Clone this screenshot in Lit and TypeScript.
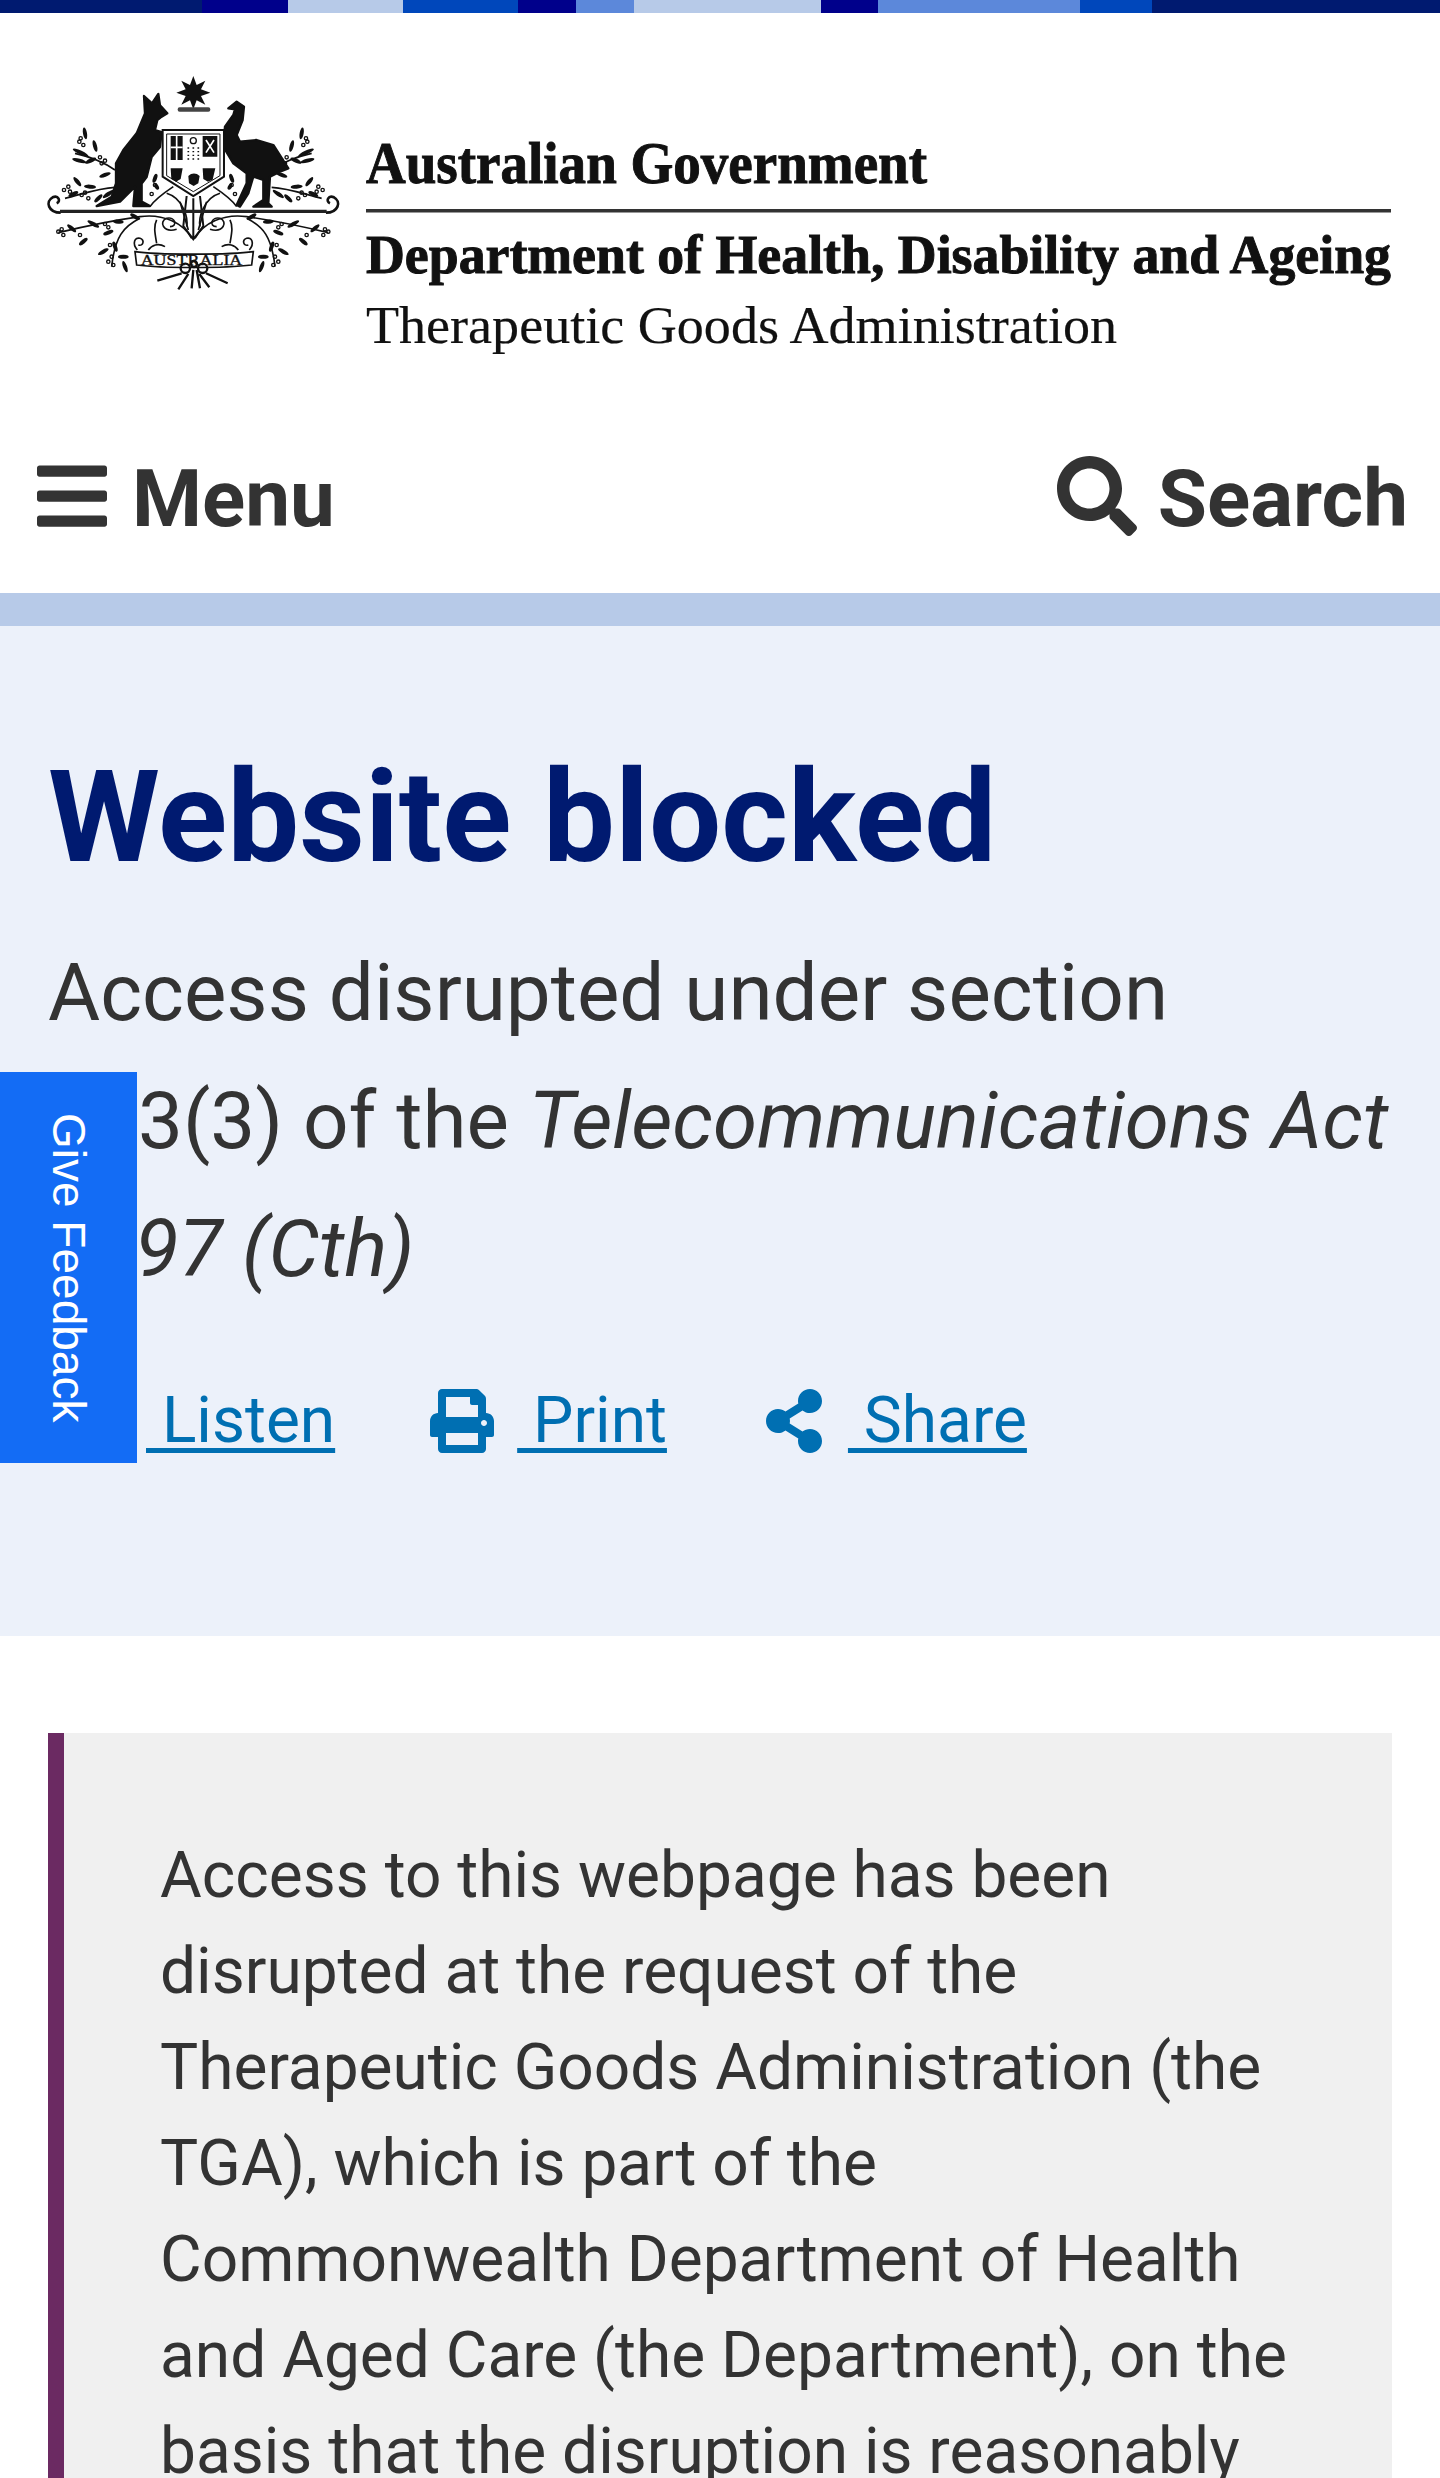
import { LitElement, html, css, svg } from "lit";
import { customElement } from "lit/decorators.js";

const SEGMENTS: [number, string][] = [
  [202, "#001a70"], [86, "#00008b"], [115, "#b7cae8"], [115, "#0047bb"], [58, "#00008b"],
  [58, "#5c88da"], [187, "#b7cae8"], [57, "#00008b"], [202, "#5c88da"], [72, "#0047bb"], [288, "#001a70"],
];

// x, y, angle, half length — left half of the crest's foliage; mirrored for the right.
const LEAVES: number[][] = [
  [135, 190, 80, 18], [165, 228, 75, 18], [122, 248, 25, 26], [118, 272, 15, 22], [152, 272, -25, 18], [195, 315, -20, 18],
  [112, 335, 50, 17], [150, 350, 5, 18], [100, 372, -25, 16], [205, 372, -35, 20], [175, 385, -45, 16],
  [95, 475, 40, 17], [160, 462, 30, 20], [130, 515, -40, 16], [235, 455, 5, 16], [205, 488, -20, 16], [285, 440, 30, 16],
  [190, 545, -30, 18], [250, 560, 0, 16], [255, 590, 70, 18], [225, 530, 70, 16], [345, 325, -70, 14], [350, 350, 60, 10],
];
const DOTS: number[][] = [
  [122, 205], [130, 225], [118, 215], [180, 262], [195, 272], [185, 280], [85, 350], [72, 360], [90, 365], [125, 375], [145, 385], [135, 368],
  [345, 345], [335, 372], [55, 485], [65, 478], [70, 495], [195, 462], [205, 472], [120, 495], [215, 560], [205, 575], [220, 585], [210, 525],
];

const foliage = svg`
  <g fill="#111">
    ${LEAVES.map(([x, y, a, l]) => svg`<ellipse cx=${x} cy=${y} rx=${l} ry="6" transform="rotate(${a} ${x} ${y})"></ellipse>`)}
    ${DOTS.map(([x, y]) => svg`<circle cx=${x} cy=${y} r="5" fill="none" stroke="#111" stroke-width="4"></circle>`)}
  </g>
  <g fill="none" stroke="#111" stroke-width="5">
    <path d="M225 300 C190 275 150 260 105 250"></path>
    <path d="M225 352 C170 355 120 375 75 385"></path>
    <path d="M455 505 C430 460 370 430 300 440 C230 450 130 470 55 488"></path>
    <path d="M300 445 C250 470 225 500 215 590"></path>
    <path d="M440 470 C445 445 430 385 380 370"></path>
    <path d="M410 478 C370 490 355 455 380 445 C405 438 415 470 390 470"></path>
    <path d="M350 520 C345 490 340 470 350 450"></path>
    <path d="M292 540 C275 520 285 500 300 505 C315 510 310 530 295 525"></path>
    <path d="M325 540 C335 525 355 518 375 530"></path>
    <path d="M420 395 L445 480 M400 350 C370 370 340 395 330 410"></path>
  </g>`;

@customElement("app-root")
export class AppRoot extends LitElement {
  static styles = css`
    :host { display: block; position: relative; width: 1440px; height: 2478px; overflow: hidden; background: #fff; font-family: Roboto, sans-serif; color: #333; }
    .topbar { display: flex; height: 13px; }
    .logo { display: block; }
    .nav { display: flex; justify-content: space-between; align-items: center; height: 80px; padding: 43px 32px 57px 37px; }
    .nav-item { display: flex; align-items: center; gap: 25px; font-size: 80px; font-weight: 700; line-height: 80px; }
    .nav-item span { margin-top: 6px; }
    .nav-item.search { gap: 21px; }
    .nav-item svg { display: block; height: 80px; fill: #333; }
    .strip { height: 33px; background: #b7cae8; }
    .hero { height: 896px; padding: 114px 48px 0; background: #ecf1fa; }
    h1 { margin: 0 0 35px; font-size: 128px; line-height: 154px; font-weight: 700; color: #001a70; }
    .lede { margin: 0 0 60px; font-size: 80px; line-height: 128px; }
    .actions { display: flex; gap: 94px; margin-left: 4px; font-size: 64px; line-height: 96px; color: #006fb2; }
    .action { display: flex; align-items: center; gap: 22px; }
    .action.print { margin-left: 1px; gap: 23px; }
    .action.share { gap: 26px; margin-left: 5px; }
    .action svg { display: block; height: 64px; fill: #006fb2; flex: none; }
    .label { white-space: pre; text-decoration: underline; text-decoration-thickness: 5px; text-underline-offset: 6px; }
    .callout { margin: 97px 48px 0; padding: 95px 96px 0; border-left: 16px solid #6b2a62; background: #f0f0f0; font-size: 64px; line-height: 96px; height: 800px; }
    .callout p { margin: 0; }
    .feedback { position: absolute; left: 0; top: 1072px; display: flex; align-items: center; justify-content: center; width: 137px; height: 391px; background: #136cf5; color: #fff; font-family: "Liberation Sans", Arial, sans-serif; font-size: 46px; writing-mode: vertical-rl; }
  `;

  render() {
    return html`
      <div class="topbar">
        ${SEGMENTS.map(([w, c]) => html`<span style="width:${w}px;background:${c}"></span>`)}
      </div>
      <svg class="logo" width="1440" height="400" viewBox="0 13 1440 400" role="img" aria-label="Australian Government crest">
        <g transform="translate(40 70) scale(.3333)">
          ${foliage}
          <g transform="matrix(-1 0 0 1 920 0)">${foliage}</g>
          <path fill="#111" d="M460 18l10 27 26-13-13 26 28 10-28 10 13 26-26-13-10 27-10-27-26 13 13-26-28-10 28-10-13-26 26 13z"></path>
          <rect x="413" y="112" width="98" height="13" rx="6" fill="#444"></rect>
          <path fill="#111" stroke="#111" stroke-width="7" stroke-linejoin="round" d="M312 78l24 22 19-28 5 34 22 24-17 10-13 10-7 30 20 6-5 45-25 30-15 60-15 20v54l25 13h-50l5-58-45 45-70 13 45-28 13-40v-60l22-40 40-50 25-60z"></path>
          <path fill="#111" stroke="#111" stroke-width="7" stroke-linejoin="round" d="M565 115l25-20 22 15-4 40-18 45 10 20 50-5 50 15 45 70-25 10-30 15-5 80 10 10h-55l30-20v-60l-30-10-15 50-25 40-10-5 30-65v-30l-40-30-30-50 5-60 25-35 5-17z"></path>
          <path d="M368 180h184v140l-92 58-92-58z" fill="#fff" stroke="#111" stroke-width="6"></path>
          <path d="M380 192h160v125l-80 48-80-48z" fill="none" stroke="#111" stroke-width="3"></path>
          <path fill="#111" d="M392 198h36v72h-36zM488 198h44v62h-44z"></path>
          <path stroke="#fff" stroke-width="5" d="M410 198v72M392 232h36M498 210l24 38M522 210l-24 38"></path>
          <circle cx="460" cy="212" r="9" fill="none" stroke="#111" stroke-width="4"></circle>
          <path stroke="#111" stroke-width="5" stroke-dasharray="4 7" d="M445 232v40M460 232v40M475 232v40"></path>
          <path fill="#111" d="M392 295h36l-6 32-14 8-14-8zM445 318c10-10 24-10 34 0l-4 22-14 8-14-8zM488 295h38l-8 34-14 6-14-8z"></path>
          <path stroke="#111" stroke-width="6" fill="none" d="M440 378l-10 90 30 40 30-40-10-90M460 385v120"></path>
          <path d="M62 428C25 428 15 395 38 382c17-8 26 12 12 18" fill="none" stroke="#111" stroke-width="8"></path>
          <path d="M858 428c37 0 47-33 24-46-17-8-26 12-12 18" fill="none" stroke="#111" stroke-width="8"></path>
          <path d="M60 424H860" stroke="#222" stroke-width="10"></path>
          <path d="M285 545c60 10 290 10 355 0l-5 40c-80 10-270 10-345 0z" fill="#fff" stroke="#111" stroke-width="5"></path>
          <text x="302" y="585" font-family="'Liberation Serif', serif" font-size="42" fill="#111" stroke="#111" stroke-width="1" textLength="305" lengthAdjust="spacingAndGlyphs">AUSTRALIA</text>
          <g fill="none" stroke="#111" stroke-width="7">
            <circle cx="436" cy="595" r="14"></circle><circle cx="488" cy="595" r="14"></circle><circle cx="462" cy="582" r="9"></circle>
            <path d="M425 610L352 632M498 610l65 30M445 612l-30 46M478 612l30 40M460 600l-5 55M470 600l10 55"></path>
          </g>
        </g>
        <g fill="#111" stroke="#111" font-family="'Liberation Serif', 'Times New Roman', serif">
          <text transform="translate(366 183) scale(1 1.08)" font-size="55" font-weight="700" stroke-width=".9" textLength="561" lengthAdjust="spacingAndGlyphs">Australian Government</text>
          <rect x="366" y="209" width="1025" height="3.5" fill="#333" stroke="none"></rect>
          <text transform="translate(366 273) scale(1 1.08)" font-size="50" font-weight="700" stroke-width=".9" textLength="1025" lengthAdjust="spacingAndGlyphs">Department of Health, Disability and Ageing</text>
          <text transform="translate(366 343) scale(1 1.06)" font-size="50" stroke-width=".2" textLength="751" lengthAdjust="spacingAndGlyphs">Therapeutic Goods Administration</text>
        </g>
      </svg>
      <div class="nav">
        <div class="nav-item">
          <svg viewBox="0 0 448 512"><path d="M16 132h416c8.837 0 16-7.163 16-16V76c0-8.837-7.163-16-16-16H16C7.163 60 0 67.163 0 76v40c0 8.837 7.163 16 16 16zm0 160h416c8.837 0 16-7.163 16-16v-40c0-8.837-7.163-16-16-16H16c-8.837 0-16 7.163-16 16v40c0 8.837 7.163 16 16 16zm0 160h416c8.837 0 16-7.163 16-16v-40c0-8.837-7.163-16-16-16H16c-8.837 0-16 7.163-16 16v40c0 8.837 7.163 16 16 16z"></path></svg>
          <span>Menu</span>
        </div>
        <div class="nav-item search">
          <svg viewBox="0 0 512 512"><path d="M505 442.7L405.3 343c-4.5-4.5-10.6-7-17-7H372c27.6-35.3 44-79.7 44-128C416 93.1 322.9 0 208 0S0 93.1 0 208s93.1 208 208 208c48.3 0 92.7-16.4 128-44v16.3c0 6.4 2.5 12.5 7 17l99.7 99.7c9.4 9.4 24.6 9.4 33.9 0l28.3-28.3c9.4-9.4 9.4-24.6.1-34zM208 336c-70.7 0-128-57.2-128-128 0-70.7 57.2-128 128-128 70.7 0 128 57.2 128 128 0 70.7-57.2 128-128 128z"></path></svg>
          <span>Search</span>
        </div>
      </div>
      <div class="strip"></div>
      <section class="hero">
        <h1>Website blocked</h1>
        <p class="lede">Access disrupted under section<br />313(3) of the <em>Telecommunications Act<br />1997 (Cth)</em></p>
        <div class="actions">
          <a class="action">
            <svg viewBox="0 0 576 512"><path d="M215 71.100L126.100 160H24c-13.300 0-24 10.700-24 24v144c0 13.300 10.700 24 24 24h102.100l89 89c15 15 41 4.500 41-17V88c0-21.500-26-32-41-17z"></path></svg>
            <span class="label"> Listen</span>
          </a>
          <a class="action print">
            <svg viewBox="0 0 512 512"><path d="M448 192V77.25c0-8.49-3.37-16.62-9.37-22.63L393.37 9.37c-6-6-14.14-9.37-22.63-9.37H96C78.33 0 64 14.33 64 32v160c-35.35 0-64 28.65-64 64v112c0 8.84 7.16 16 16 16h48v96c0 17.67 14.33 32 32 32h320c17.67 0 32-14.33 32-32v-96h48c8.84 0 16-7.16 16-16V256c0-35.35-28.65-64-64-64zm-64 256H128v-96h256v96zm0-224H128V64h192v48c0 8.84 7.16 16 16 16h48v96zm48 72c-13.25 0-24-10.75-24-24 0-13.26 10.75-24 24-24s24 10.74 24 24c0 13.25-10.75 24-24 24z"></path></svg>
            <span class="label"> Print</span>
          </a>
          <a class="action share">
            <svg viewBox="0 0 448 512"><path d="M352 320c-22.608 0-43.387 7.819-59.79 20.895l-102.486-64.054a96.551 96.551 0 0 0 0-41.683l102.486-64.054C308.613 184.181 329.392 192 352 192c53.019 0 96-42.981 96-96S405.019 0 352 0s-96 42.981-96 96c0 7.158.79 14.13 2.276 20.841L155.79 180.895C139.387 167.819 118.608 160 96 160c-53.019 0-96 42.981-96 96s42.981 96 96 96c22.608 0 43.387-7.819 59.79-20.895l102.486 64.054A96.301 96.301 0 0 0 256 416c0 53.019 42.981 96 96 96s96-42.981 96-96-42.981-96-96-96z"></path></svg>
            <span class="label"> Share</span>
          </a>
        </div>
      </section>
      <section class="callout">
        <p>Access to this webpage has been disrupted at the request of the Therapeutic Goods Administration (the TGA), which is part of the Commonwealth Department of Health and Aged Care (the Department), on the basis that the disruption is reasonably</p>
      </section>
      <div class="feedback">Give Feedback</div>
    `;
  }
}
